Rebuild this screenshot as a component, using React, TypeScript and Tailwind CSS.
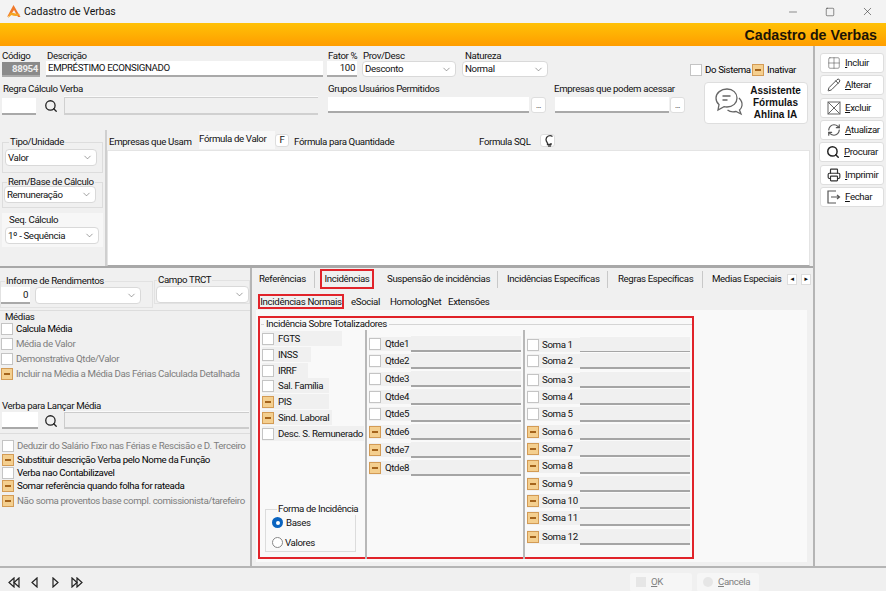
import { ChevronDown, Grid2x2, Pencil, RefreshCw, Search, Printer, Minus, Square, X } from 'lucide-react'

function Check({ on = false, className = '' }: { on?: boolean; className?: string }) {
  if (on) {
    return (
      <span className={`flex h-[12px] w-[12px] shrink-0 items-center justify-center border border-[#d39b55] bg-[#f4cf8f] ${className}`}>
        <span className="h-[2px] w-[6px] bg-[#a5641c]" />
      </span>
    )
  }
  return <span className={`h-[12px] w-[12px] shrink-0 border border-[#c4c4c4] bg-white ${className}`} />
}

function Select({ value, className = '' }: { value?: string; className?: string }) {
  return (
    <div className={`flex items-center justify-between rounded-[4px] border border-[#d9d9d9] bg-white pl-[2px] pr-[3px] ${className}`}>
      <span>{value}</span>
      <ChevronDown size={11} strokeWidth={1.2} className="text-[#555]" />
    </div>
  )
}

function SunkenInput({ className = '', children }: { className?: string; children?: React.ReactNode }) {
  return <div className={`border-b-2 border-[#a9a9a9] bg-white ${className}`}>{children}</div>
}

function ReadonlyField({ className = '' }: { className?: string }) {
  return <div className={`border-b-2 border-[#a5a5a5] bg-[#f0f0f0] shadow-[0_-1px_0_#fafafa] ${className}`} />
}

function DotsBtn() {
  return <div className="flex h-[16px] w-[15px] items-end justify-center rounded-[3px] border border-[#dedede] bg-white pb-[1px] text-[8px] leading-[10px]">...</div>
}

function CheckLine({ label, on, dim, className = '' }: { label: string; on?: boolean; dim?: boolean; className?: string }) {
  return (
    <div className={`flex items-center gap-[3px] whitespace-nowrap ${dim ? 'text-[#7d7d7d]' : 'text-black'} ${className}`}>
      <Check on={on} />
      <span>{label}</span>
    </div>
  )
}

function LoupeBtn() {
  return <Search size={14} strokeWidth={2.2} className="text-[#222]" />
}

function XBoxIcon() {
  return (
    <svg width="14" height="14" viewBox="0 0 14 14" fill="none" stroke="#666" strokeWidth="1">
      <rect x="1" y="1" width="12" height="12" />
      <path d="M1 1l12 12M13 1L1 13" />
    </svg>
  )
}

function ExitIcon() {
  return (
    <svg width="14" height="14" viewBox="0 0 14 14" fill="none" stroke="#555" strokeWidth="1.2">
      <path d="M9 1H1v12h8" />
      <path d="M4 7h8M10 5l2.500 2-2.500 2" />
    </svg>
  )
}

function ChatIcon() {
  return (
    <svg width="30" height="32" viewBox="0 0 30 32" fill="none" stroke="#666" strokeWidth="1.300">
      <path d="M13 2c6 0 10 4 10 9s-4 9-10 9c-1 0-2 0-3-.4L4 23l1-5.500C3 16 2 13.500 2 11c0-5 5-9 11-9z" />
      <path d="M8.500 9h8M8.500 13h5" />
      <path d="M25 11c2 2 3.500 4.500 3 7.500-.3 2-1 3.500-2.500 4.500l1.500 4-5-2.500c-3 .8-6 .5-8.500-1.500" />
    </svg>
  )
}

function BulbIcon() {
  return (
    <svg width="9" height="13" viewBox="0 0 9 13" fill="none" stroke="#333" strokeWidth="1.300">
      <path d="M7.500 2.500A4 4 0 0 0 1 5.500c0 1.500.8 2.500 1.500 3.500v1.500h3.500V9" />
      <path d="M3 12h3" />
    </svg>
  )
}

function Logo() {
  return (
    <svg width="15" height="15" viewBox="0 0 15 15">
      <path d="M7.500 1L1 13l4-2.500L8 6l4 7h2.500z" fill="#f0792b" />
      <path d="M4 9c3-1 6 1 10 1-3 3-6 2-8.500 1L2 14z" fill="#f5a623" />
    </svg>
  )
}

function NavIcon({ dir, double }: { dir: 'l' | 'r'; double?: boolean }) {
  const paths = dir === 'l'
    ? (double ? ['M6 1L1 5.500 6 10z', 'M11 1L6 5.500 11 10z'] : ['M8 1L3 5.500 8 10z'])
    : (double ? ['M1 1l5 4.500L1 10z', 'M6 1l5 4.500L6 10z'] : ['M3 1l5 4.500L3 10z'])
  return (
    <svg width="12" height="11" viewBox="0 0 12 11" fill="none" stroke="#222" strokeWidth="1.200">
      {paths.map(d => <path key={d} d={d} />)}
    </svg>
  )
}

const toolButtons = [
  { key: 'I', rest: 'ncluir', icon: <Grid2x2 size={14} strokeWidth={1} className="text-[#555]" />, cls: 'ml-[5px] w-[64px]' },
  { key: 'A', rest: 'lterar', icon: <Pencil size={14} strokeWidth={1.500} className="text-[#333]" />, cls: 'ml-[5px] w-[64px]' },
  { key: 'E', rest: 'xcluir', icon: <XBoxIcon />, cls: 'ml-[5px] w-[64px]' },
  { key: 'A', rest: 'tualizar', icon: <RefreshCw size={14} strokeWidth={2} className="text-[#555]" />, cls: 'ml-[5px] w-[64px]' },
  { key: 'P', rest: 'rocurar', icon: <Search size={14} strokeWidth={2.500} className="text-[#222]" />, cls: 'ml-[4px] w-[65px]' },
  { key: 'I', rest: 'mprimir', icon: <Printer size={14} strokeWidth={2} className="text-[#333]" />, cls: 'ml-[5px] w-[64px]' },
  { key: 'F', rest: 'echar', icon: <ExitIcon />, cls: 'ml-[5px] w-[64px]' },
]

const totalsLeft = [
  { label: 'FGTS', on: false, cls: 'w-[80px]' },
  { label: 'INSS', on: false, cls: 'mt-[1px] w-[49px]' },
  { label: 'IRRF', on: false, cls: 'mt-[1px] w-[46px]' },
  { label: 'Sal. Família', on: false, cls: 'w-[67px]' },
  { label: 'PIS', on: true, cls: 'mt-[1px] w-[67px]' },
  { label: 'Sind. Laboral', on: true, cls: 'mt-[1px] w-[70px]' },
  { label: 'Desc. S. Remunerado', on: false, cls: 'mt-[1px] w-[102px]' },
]

const qtdes = [
  { label: 'Qtde1', on: false, cls: '' },
  { label: 'Qtde2', on: false, cls: '' },
  { label: 'Qtde3', on: false, cls: 'mt-[1px]' },
  { label: 'Qtde4', on: false, cls: 'mt-[1px]' },
  { label: 'Qtde5', on: false, cls: '' },
  { label: 'Qtde6', on: true, cls: 'mt-[1px]' },
  { label: 'Qtde7', on: true, cls: 'mt-[1px]' },
  { label: 'Qtde8', on: true, cls: 'mt-[1px]' },
]

const somas = [
  { label: 'Soma 1', on: false, cls: '' },
  { label: 'Soma 2', on: false, cls: 'mt-[-1px]' },
  { label: 'Soma 3', on: false, cls: 'mt-[2px]' },
  { label: 'Soma 4', on: false, cls: '' },
  { label: 'Soma 5', on: false, cls: '' },
  { label: 'Soma 6', on: true, cls: 'mt-[1px]' },
  { label: 'Soma 7', on: true, cls: '' },
  { label: 'Soma 8', on: true, cls: '' },
  { label: 'Soma 9', on: true, cls: 'mt-[1px]' },
  { label: 'Soma 10', on: true, cls: '' },
  { label: 'Soma 11', on: true, cls: '' },
  { label: 'Soma 12', on: true, cls: 'mt-[2px]' },
]

export default function App() {
  return (
    <div className="flex h-[591px] w-[886px] flex-col overflow-hidden bg-[#f0f0f0] font-['Roboto','Liberation_Sans',sans-serif] text-[9.700px] leading-[12px] tracking-[-0.37px] text-[#111]">
      {/* title bar */}
      <div className="flex h-[23px] items-center bg-[#f3f3f3] pl-[6px]">
        <Logo />
        <span className="ml-[3px] text-[10.500px] tracking-normal">Cadastro de Verbas</span>
        <div className="ml-auto flex items-center gap-[26px] pr-[12px] text-[#222]">
          <Minus size={12} strokeWidth={1} />
          <Square size={10} strokeWidth={1.200} />
          <X size={13} strokeWidth={1} />
        </div>
      </div>
      <div className="flex h-[23px] items-center justify-end bg-gradient-to-b from-[#ffc107] to-[#ff9d00] pr-[9px] font-['Liberation_Sans',sans-serif] text-[14.200px] font-bold tracking-normal text-[#1c1406]">
        Cadastro de Verbas
      </div>

      <div className="flex h-[520px]">
        <div className="flex w-[813px] flex-col">
          {/* header form */}
          <div className="flex h-[84px] shrink-0">
            <div className="w-[690px] whitespace-nowrap pl-[2px]">
              <div className="flex pt-[4px]">
                <div className="w-[44px]">
                  <div className="h-[11px]">Código</div>
                  <div className="mt-[1px] flex h-[15px] w-[38px] items-center justify-end border-b-2 border-[#aaa] bg-[#8a8a8a] pr-[2px] font-bold text-[#eee]">88954</div>
                </div>
                <div className="w-[281px]">
                  <div className="h-[11px] pl-[1px]">Descrição</div>
                  <SunkenInput className="flex h-[16px] w-[277px] items-center pl-[2px]">EMPRÉSTIMO ECONSIGNADO</SunkenInput>
                </div>
                <div className="w-[35px]">
                  <div className="h-[11px] pl-[1px]">Fator %</div>
                  <SunkenInput className="flex h-[16px] w-[30px] items-center justify-end pr-[2px]">100</SunkenInput>
                </div>
                <div className="w-[100px]">
                  <div className="h-[11px] pl-[1px]">Prov/Desc</div>
                  <Select value="Desconto" className="h-[16px] w-[94px]" />
                </div>
                <div className="w-[86px]">
                  <div className="h-[11px] pl-[3px]">Natureza</div>
                  <Select value="Normal" className="h-[16px] w-[86px]" />
                </div>
              </div>
              <div className="mt-[6px] flex">
                <div className="w-[326px]">
                  <div className="h-[14px] pl-[1px]">Regra Cálculo Verba</div>
                  <div className="flex items-center">
                    <SunkenInput className="h-[17px] w-[34px]" />
                    <div className="flex w-[28px] justify-center pl-[1px]"><LoupeBtn /></div>
                    <ReadonlyField className="h-[18px] w-[254px] border-l border-t border-[#d0d0d0]" />
                  </div>
                </div>
                <div className="w-[226px]">
                  <div className="h-[14px]">Grupos Usuários Permitidos</div>
                  <div className="flex items-center gap-[2px]">
                    <SunkenInput className="h-[16px] w-[201px]" />
                    <DotsBtn />
                  </div>
                </div>
                <div>
                  <div className="h-[14px]">Empresas que podem acessar</div>
                  <div className="flex items-center gap-[1px] pl-[1px]">
                    <SunkenInput className="h-[16px] w-[114px]" />
                    <DotsBtn />
                  </div>
                </div>
              </div>
            </div>
            <div className="flex-1">
              <div className="mt-[18px] flex items-center">
                <CheckLine label="Do Sistema" className="w-[62px]" />
                <CheckLine on label="Inativar" />
              </div>
              <div className="ml-[14px] mt-[6px] flex h-[42px] w-[104px] items-center rounded-[4px] border border-[#dedede] bg-white pl-[9px]">
                <ChatIcon />
                <div className="flex-1 text-center font-['Liberation_Sans',sans-serif] text-[10px] font-bold leading-[12px] tracking-normal">Assistente<br />Fórmulas<br />Ahlina IA</div>
              </div>
            </div>
          </div>

          {/* formula area */}
          <div className="flex h-[138px] shrink-0 border-b-2 border-[#a8a8a8]">
            <div className="flex w-[107px] shrink-0 flex-col whitespace-nowrap border-r-2 border-[#cfcfcf] pl-[2px] pr-[2px] pt-[6px]">
              <fieldset className="h-[37px] min-w-0 border border-[#dddddd] pl-[2px] pr-[3px]">
                <legend className="ml-[4px] px-[1px]">Tipo/Unidade</legend>
                <Select value="Valor" className="mt-[1px] h-[17px] w-[92px]" />
              </fieldset>
              <fieldset className="mt-[3px] h-[32px] min-w-0 border border-[#dddddd] pl-[1px]">
                <legend className="ml-[3px] px-[1px]">Rem/Base de Cálculo</legend>
                <Select value="Remuneração" className="mt-[-2px] h-[17px] w-[92px]" />
              </fieldset>
              <div className="mt-[5px] bg-[#f7f7f7] pb-[3px] pl-[3px] pt-[1px]">
                <div className="h-[12px] pl-[4px]">Seq. Cálculo</div>
                <Select value="1º - Sequência" className="mt-[1px] h-[17px] w-[94px]" />
              </div>
            </div>
            <div className="flex flex-1 flex-col pr-[3px]">
              <div className="flex h-[20px] items-center whitespace-nowrap">
                <span className="ml-[2px] w-[90px] pt-[3px]">Empresas que Usam</span>
                <span className="flex h-[18px] w-[76px] items-center bg-[#f8f8f8] pb-[2px]">Fórmula de Valor</span>
                <span className="flex h-[13px] w-[14px] items-center justify-center rounded-[3px] border border-[#ddd] bg-white">F</span>
                <span className="ml-[5px] w-[185px] pt-[3px]">Fórmula para Quantidade</span>
                <span className="w-[61px] pt-[3px]">Formula SQL</span>
                <span className="flex h-[13px] w-[15px] items-center justify-end rounded-[3px] border border-[#ddd] bg-white"><BulbIcon /></span>
              </div>
              <div className="h-[116px] w-[703px] border border-[#e4e4e4] border-b-[#a8a8a8] bg-white" />
            </div>
          </div>

          {/* lower area */}
          <div className="flex flex-1">
            <div className="w-[252px] shrink-0 whitespace-nowrap border-r-2 border-[#b5b5b5]">
              <div className="flex pt-[6px]">
                <div className="w-[153px]">
                  <fieldset className="mt-[1px] h-[33px] min-w-0 border border-[#e2e2e2] pr-[2px]">
                    <legend className="ml-[4px] px-[1px]">Informe de Rendimentos</legend>
                    <div className="flex gap-[5px]">
                      <SunkenInput className="flex h-[17px] w-[29px] items-center justify-end pr-[2px]">0</SunkenInput>
                      <Select className="h-[17px] w-[106px]" />
                    </div>
                  </fieldset>
                </div>
                <fieldset className="ml-[1px] h-[30px] w-[96px] min-w-0 border border-[#e2e2e2] pl-[1px]">
                  <legend className="ml-[1px] px-[1px]">Campo TRCT</legend>
                  <Select className="h-[17px] w-[93px]" />
                </fieldset>
              </div>

              <div className="mt-[2px] border-t border-[#dddddd] pl-[1px]">
                <div className="pl-[4px]">Médias</div>
                <div className="mt-[-1px] flex flex-col">
                  <CheckLine label="Calcula Média" className="h-[14px]" />
                  <CheckLine dim label="Média de Valor" className="h-[15px]" />
                  <CheckLine dim label="Demonstrativa Qtde/Valor" className="h-[15px]" />
                  <CheckLine dim on label="Incluir na Média a Média Das Férias Calculada Detalhada" className="h-[15px]" />
                </div>
                <div className="mt-[19px] pl-[1px]">Verba para Lançar Média</div>
                <div className="flex items-center pl-[1px]">
                  <SunkenInput className="h-[17px] w-[36px]" />
                  <div className="flex w-[26px] justify-center"><LoupeBtn /></div>
                  <ReadonlyField className="h-[17px] w-[185px] border-l border-t border-[#ccc]" />
                </div>
              </div>

              <div className="mt-[4px] border-t border-[#dddddd] pl-[2px] pt-[5px]">
                <CheckLine dim label="Deduzir do Salário Fixo nas  Férias e Rescisão e D. Terceiro" className="h-[14px]" />
                <CheckLine on label="Substituir descrição Verba pelo Nome da Função" className="h-[13px]" />
                <CheckLine label="Verba nao Contabilizavel" className="h-[13px]" />
                <CheckLine on label="Somar referência quando folha for rateada" className="h-[14px]" />
                <CheckLine dim on label="Não soma proventos base compl. comissionista/tarefeiro" className="h-[15px]" />
              </div>
            </div>

            <div className="flex flex-1 flex-col pl-[2px]">
              {/* tabs */}
              <div className="flex h-[25px] items-center whitespace-nowrap pb-[3px]">
                <span className="ml-[5px] flex h-[17px] w-[56px] items-center border-r border-[#c8c8c8]">Referências</span>
                <span className="ml-[5px] flex h-[20px] w-[54px] items-center justify-center border-2 border-[#e1232a]">Incidências</span>
                <span className="ml-[13px] flex h-[17px] w-[111px] items-center border-r border-[#c8c8c8]">Suspensão de incidências</span>
                <span className="flex h-[17px] w-[110px] items-center border-r border-[#c8c8c8] pl-[9px]">Incidências Específicas</span>
                <span className="flex h-[17px] w-[95px] items-center border-r border-[#c8c8c8] pl-[10px]">Regras Específicas</span>
                <span className="w-[84px] pl-[9px]">Medias Especiais</span>
                <span className="flex h-[11px] w-[10px] items-center justify-center border border-[#ddd] bg-white text-[6px]">◄</span>
                <span className="ml-[4px] flex h-[11px] w-[10px] items-center justify-center border border-[#ddd] bg-white text-[6px]">►</span>
              </div>
              <div className="flex h-[17px] items-center whitespace-nowrap pl-[4px]">
                <span className="flex h-[15px] w-[86px] items-center justify-center border-2 border-[#e1232a]">Incidências Normais</span>
                <span className="ml-[7px] w-[39px]">eSocial</span>
                <span className="w-[58px]">HomologNet</span>
                <span>Extensões</span>
              </div>

              {/* incidence panel */}
              <div className="ml-[2px] h-[252px] w-[551px] bg-[#f9f9f9] pl-[2px] pt-[6px]">
                <div className="h-[243px] w-[436px] whitespace-nowrap border-2 border-[#e1232a] pl-[1px]">
                  <fieldset className="h-[240px] min-w-0 border-t border-[#d5d5d5]">
                    <legend className="ml-[3px] px-[2px]">Incidência Sobre Totalizadores</legend>
                    <div className="flex h-[229px]">
                      <div className="flex w-[106px] shrink-0 flex-col border-r-2 border-[#b8b8b8] pl-[1px] pt-[1px]">
                        {totalsLeft.map(t => (
                          <div key={t.label} className={`flex h-[15px] items-center gap-[4px] bg-[#f0f0f0] ${t.cls}`}>
                            <Check on={t.on} />
                            <span>{t.label}</span>
                          </div>
                        ))}
                        <fieldset className="ml-[3px] mt-[62px] h-[49px] w-[91px] min-w-0 border border-[#dcdcdc] pl-[6px]">
                          <legend className="ml-[5px] px-[1px]">Forma de Incidência</legend>
                          <div className="flex h-[15px] items-center gap-[3px]">
                            <span className="flex h-[11px] w-[11px] items-center justify-center rounded-full bg-[#0a64c0]">
                              <span className="h-[4px] w-[4px] rounded-full bg-white" />
                            </span>
                            Bases
                          </div>
                          <div className="mt-[5px] flex h-[15px] items-center gap-[2px]">
                            <span className="h-[11px] w-[11px] rounded-full border border-[#888] bg-white" />
                            Valores
                          </div>
                        </fieldset>
                      </div>
                      <div className="flex w-[158px] shrink-0 flex-col border-r-2 border-[#b8b8b8] pl-[2px] pt-[5px]">
                        {qtdes.map(q => (
                          <div key={q.label} className={`flex h-[17px] items-center ${q.cls}`}>
                            <div className="flex h-[14px] w-[42px] items-center gap-[4px] bg-[#f0f0f0]">
                              <Check on={q.on} />
                              {q.label}
                            </div>
                            <ReadonlyField className="h-[16px] w-[110px]" />
                          </div>
                        ))}
                      </div>
                      <div className="flex flex-col pl-[2px] pt-[6px]">
                        {somas.map(s => (
                          <div key={s.label} className={`flex h-[17px] items-center ${s.cls}`}>
                            <div className="flex h-[14px] w-[53px] items-center gap-[3px] bg-[#f0f0f0]">
                              <Check on={s.on} />
                              {s.label}
                            </div>
                            <ReadonlyField className="h-[16px] w-[110px]" />
                          </div>
                        ))}
                      </div>
                    </div>
                  </fieldset>
                </div>
              </div>
            </div>
          </div>
        </div>

        {/* side toolbar */}
        <div className="flex-1 border-l-2 border-[#b5b5b5] pt-[7px]">
          <div className="flex flex-col gap-[2.330px]">
            {toolButtons.map(b => (
              <div key={b.key + b.rest} className={`flex h-[20px] items-center gap-[4px] rounded-[3px] border border-[#dedede] bg-white pl-[6px] ${b.cls}`}>
                {b.icon}
                <span><u>{b.key}</u>{b.rest}</span>
              </div>
            ))}
          </div>
        </div>
      </div>

      {/* footer */}
      <div className="flex h-[25px] items-center border-t-2 border-[#b5b5b5] pl-[8px]">
        <div className="flex items-center gap-[9px] pt-[5px]">
          <NavIcon dir="l" double />
          <NavIcon dir="l" />
          <NavIcon dir="r" />
          <NavIcon dir="r" double />
        </div>
        <div className="ml-[547px] flex gap-[5px] pt-[5px] text-[#808080]">
          <div className="flex h-[19px] w-[62px] items-center gap-[5px] rounded-[3px] bg-[#f6f6f6] pl-[6px]">
            <span className="h-[10px] w-[10px] bg-[#e6e6e6]" />
            <span><u>O</u>K</span>
          </div>
          <div className="flex h-[19px] w-[62px] items-center gap-[5px] rounded-[3px] bg-[#f6f6f6] pl-[6px]">
            <span className="h-[10px] w-[10px] rounded-full bg-[#e6e6e6]" />
            <span><u>C</u>ancela</span>
          </div>
        </div>
      </div>
    </div>
  )
}
